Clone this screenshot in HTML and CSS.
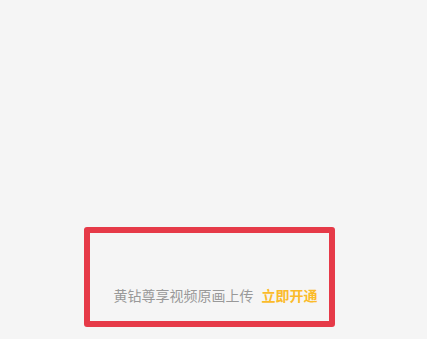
FILE: index.html
```html
<!DOCTYPE html>
<html lang="zh">
<head>
<meta charset="utf-8">
<link rel="stylesheet" href="styles.css">
</head>
<body>
<div class="page">
  <div class="frame">
    <div class="tip">
      <span class="tip-text">黄钻尊享视频原画上传</span>
      <span class="tip-link">立即开通</span>
    </div>
  </div>
</div>
</body>
</html>
```

FILE: styles.css
```css
html, body {
  margin: 0;
  padding: 0;
  background: #f5f5f5;
}
.page {
  width: 427px;
  height: 339px;
  padding: 227px 0 0 84px;
  box-sizing: border-box;
  font-family: "Noto Sans CJK SC", "Noto Sans", sans-serif;
}
.frame {
  width: 251px;
  height: 100px;
  box-sizing: border-box;
  border: 6px solid #e63a48;
  border-radius: 3px;
  display: flex;
  flex-direction: column;
  justify-content: flex-end;
  padding: 0 0 16px 12px;
}
.tip {
  display: flex;
  justify-content: center;
  align-items: center;
  gap: 8px;
  font-size: 14px;
  line-height: 20px;
}
.tip-text {
  color: #999999;
}
.tip-link {
  color: #fbbb2a;
  font-weight: bold;
}
```
